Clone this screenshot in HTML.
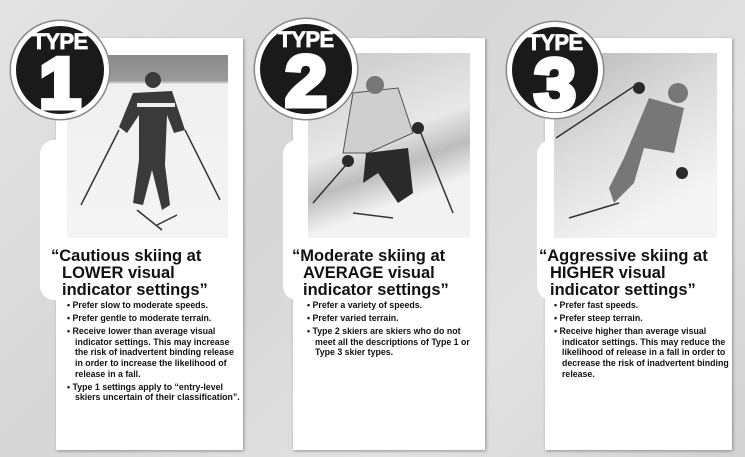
<!DOCTYPE html>
<html><head><meta charset="utf-8"><style>
*{margin:0;padding:0;box-sizing:border-box}
body{width:745px;height:457px;overflow:hidden;background:linear-gradient(135deg,#e4e4e4,#d6d6d6 40%,#e2e2e2 70%,#d2d2d2);position:relative;font-family:"Liberation Sans",sans-serif}
.p{position:absolute;background:#fff;box-shadow:1px 1px 3px rgba(0,0,0,.35)}
.q{position:absolute;background:#fff;border-radius:14px 0 0 14px}
.ph{position:absolute;overflow:hidden}
.b{position:absolute;border-radius:50%;background:#1a1a1a;border:5px solid #fff;box-shadow:0 0 0 1.5px #888;color:#fff;text-align:center;font-weight:bold}
.b .t{position:absolute;left:0;right:0;top:3px;font-size:22px;letter-spacing:-0.5px;-webkit-text-stroke:0.8px #fff;font-weight:bold}
.b .n{position:absolute;left:0;right:0;top:22px;font-size:72px;line-height:72px;-webkit-text-stroke:5px #fff;transform:scaleX(1.05)}
.h{position:absolute;font-weight:bold;font-size:16.5px;line-height:17px;color:#111}
.h span{margin-left:-11px}
ul{position:absolute;list-style:none;font-weight:bold;font-size:8.8px;line-height:10.6px;color:#111}
li{padding-left:8px;text-indent:-8px;margin-bottom:2.5px}
li:before{content:"• "}
</style></head><body>
<!-- panels -->
<div class="p" style="left:56px;top:38px;width:187px;height:412px"></div>
<div class="q" style="left:40px;top:140px;width:40px;height:160px"></div>
<div class="p" style="left:293px;top:38px;width:192px;height:412px"></div>
<div class="q" style="left:283px;top:140px;width:40px;height:160px"></div>
<div class="p" style="left:545px;top:38px;width:187px;height:412px"></div>
<div class="q" style="left:537px;top:140px;width:40px;height:160px"></div>

<!-- photos -->
<div class="ph" style="left:67px;top:55px;width:161px;height:183px;background:linear-gradient(#8a8a8a 0,#9a9a9a 14%,#f0f0f0 16%,#f4f4f4 100%)">
<svg width="161" height="183"><g fill="#3a3a3a"><circle cx="86" cy="25" r="8"/><path d="M66 38 L105 36 L118 75 L107 78 L100 60 L98 110 L103 150 L95 155 L85 115 L76 150 L66 148 L72 105 L72 60 L60 78 L52 72Z"/></g><rect x="70" y="48" width="38" height="4" fill="#eee"/><g stroke="#333" stroke-width="1.5"><line x1="52" y1="75" x2="14" y2="150"/><line x1="118" y1="75" x2="153" y2="145"/><line x1="70" y1="155" x2="95" y2="175"/><line x1="90" y1="170" x2="110" y2="160"/></g></svg></div>
<div class="ph" style="left:308px;top:53px;width:162px;height:185px;background:linear-gradient(160deg,#c8c8c8,#e8e8e8 45%,#bdbdbd 60%,#f2f2f2 75%)">
<svg width="162" height="185"><g fill="#cfcfcf" stroke="#555" stroke-width="1"><path d="M45 40 L90 35 L105 80 L60 100 L35 100Z"/></g><circle cx="67" cy="32" r="9" fill="#777"/><g fill="#2a2a2a"><path d="M58 100 L100 95 L105 140 L90 150 L70 120 L55 130Z"/><circle cx="110" cy="75" r="6"/><circle cx="40" cy="108" r="6"/></g><g stroke="#333" stroke-width="1.5"><line x1="112" y1="78" x2="145" y2="160"/><line x1="38" y1="112" x2="5" y2="150"/><line x1="45" y1="160" x2="85" y2="165"/></g></svg></div>
<div class="ph" style="left:554px;top:53px;width:163px;height:185px;background:linear-gradient(150deg,#b8b8b8,#dcdcdc 40%,#f4f4f4 80%)">
<svg width="163" height="185"><g fill="#777"><circle cx="124" cy="40" r="10"/><path d="M95 45 L130 55 L120 100 L90 95 L80 130 L60 150 L55 135 L70 105Z"/></g><g fill="#2a2a2a"><circle cx="85" cy="35" r="6"/><circle cx="128" cy="120" r="6"/></g><g stroke="#333" stroke-width="1.5"><line x1="85" y1="30" x2="2" y2="85"/><line x1="15" y1="165" x2="65" y2="150"/></g></svg></div>

<!-- badges -->
<div class="b" style="left:11px;top:21px;width:98px;height:98px"><div class="t">TYPE</div><div class="n">1</div></div>
<div class="b" style="left:255px;top:19px;width:102px;height:100px"><div class="t">TYPE</div><div class="n">2</div></div>
<div class="b" style="left:507px;top:22px;width:96px;height:96px"><div class="t">TYPE</div><div class="n">3</div></div>

<!-- text -->
<div class="h" style="left:62px;top:248px"><span>“</span>Cautious skiing at<br>LOWER visual<br>indicator settings”</div>
<ul style="left:67px;top:300px;width:176px">
<li>Prefer slow to moderate speeds.</li>
<li>Prefer gentle to moderate terrain.</li>
<li>Receive lower than average visual indicator settings. This may increase the risk of inadvertent binding release in order to increase the likelihood of release in a fall.</li>
<li>Type 1 settings apply to “entry-level skiers uncertain of their classification”.</li></ul>

<div class="h" style="left:303px;top:248px"><span>“</span>Moderate skiing at<br>AVERAGE visual<br>indicator settings”</div>
<ul style="left:307px;top:300px;width:176px">
<li>Prefer a variety of speeds.</li>
<li>Prefer varied terrain.</li>
<li>Type 2 skiers are skiers who do not meet all the descriptions of Type 1 or Type 3 skier types.</li></ul>

<div class="h" style="left:550px;top:248px"><span>“</span>Aggressive skiing at<br>HIGHER visual<br>indicator settings”</div>
<ul style="left:554px;top:300px;width:176px">
<li>Prefer fast speeds.</li>
<li>Prefer steep terrain.</li>
<li>Receive higher than average visual indicator settings. This may reduce the likelihood of release in a fall in order to decrease the risk of inadvertent binding release.</li></ul>
</body></html>
